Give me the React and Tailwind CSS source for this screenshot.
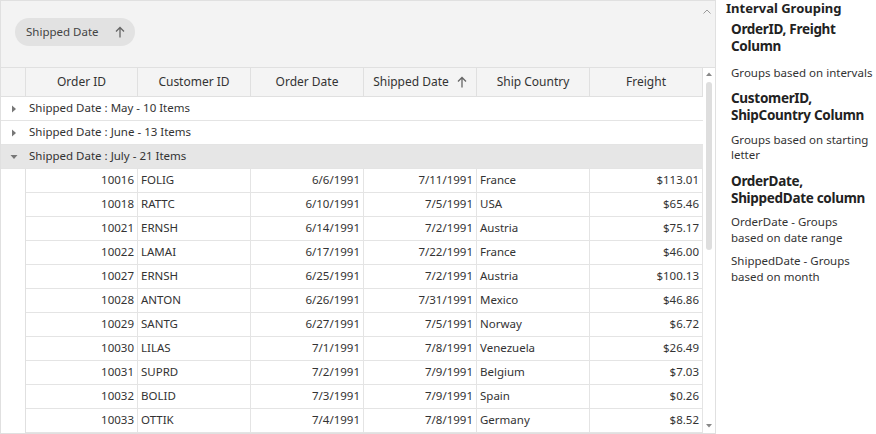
import React from "react";

const rows = [
  ["10016", "FOLIG", "6/6/1991", "7/11/1991", "France", "$113.01"],
  ["10018", "RATTC", "6/10/1991", "7/5/1991", "USA", "$65.46"],
  ["10021", "ERNSH", "6/14/1991", "7/2/1991", "Austria", "$75.17"],
  ["10022", "LAMAI", "6/17/1991", "7/22/1991", "France", "$46.00"],
  ["10027", "ERNSH", "6/25/1991", "7/2/1991", "Austria", "$100.13"],
  ["10028", "ANTON", "6/26/1991", "7/31/1991", "Mexico", "$46.86"],
  ["10029", "SANTG", "6/27/1991", "7/5/1991", "Norway", "$6.72"],
  ["10030", "LILAS", "7/1/1991", "7/8/1991", "Venezuela", "$26.49"],
  ["10031", "SUPRD", "7/2/1991", "7/9/1991", "Belgium", "$7.03"],
  ["10032", "BOLID", "7/3/1991", "7/9/1991", "Spain", "$0.26"],
  ["10033", "OTTIK", "7/4/1991", "7/8/1991", "Germany", "$8.52"],
];

const right = [true, false, true, true, false, true];

function UpArrow() {
  return (
    <svg width="10" height="12" viewBox="0 0 10 12">
      <path d="M5 1.5V11.5M1 5.5L5 1.5L9 5.5" fill="none" stroke="#666" strokeWidth="1.3" />
    </svg>
  );
}

function GroupRow({ label, open, active }) {
  return (
    <div className={`flex h-[24px] items-center border-b border-[#e4e4e4] ${active ? "bg-[#e6e6e6]" : "bg-white"}`}>
      <div className="flex w-[25px] items-center justify-center pl-[1px]">
        {open ? (
          <svg width="8" height="6" viewBox="0 0 8 6"><path d="M0.5 1L7.5 1L4 5Z" fill="#777" /></svg>
        ) : (
          <svg width="6" height="8" viewBox="0 0 6 8"><path d="M1 0.5L5 4L1 7.5Z" fill="#777" /></svg>
        )}
      </div>
      <span className="pb-[1px] pl-[3px] text-[11.5px] text-[#333]">{label}</span>
    </div>
  );
}

export default function App() {
  const headers = ["Order ID", "Customer ID", "Order Date", "Shipped Date", "Ship Country", "Freight"];
  return (
    <div className="flex h-[434px] w-[876px] bg-white" style={{ fontFamily: "'Segoe UI', 'Noto Sans', sans-serif" }}>
      <div className="flex h-[434px] w-[716px] flex-col border border-[#e0e0e0]">
        <div className="relative h-[67px] shrink-0 border-b border-[#e0e0e0] bg-[#f3f3f3] pl-[14px] pt-[17px]">
          <div className="flex h-[28px] w-[120px] items-center gap-[16px] rounded-full bg-[#e2e2e2] pl-[11px]">
            <span className="text-[11.5px] text-[#444]">Shipped Date</span>
            <UpArrow />
          </div>
          <svg width="8" height="5" viewBox="0 0 8 5" className="absolute right-[4px] top-[8px]">
            <path d="M0.5 4.5L4 1L7.5 4.5" fill="none" stroke="#999" strokeWidth="1" />
          </svg>
        </div>
        <div className="flex flex-1">
          <div className="w-[702px]">
            <div className="grid h-[29px] grid-cols-[25px_112px_113px_113px_113px_113px_113px] border-b border-[#e0e0e0] bg-[#f4f4f4]">
              <div className="border-r border-[#e0e0e0]" />
              {headers.map((h) => (
                <div key={h} className="flex items-center justify-center gap-[8px] border-r border-[#e0e0e0] text-[12px] text-[#333]">
                  <span>{h}</span>
                  {h === "Shipped Date" && <UpArrow />}
                </div>
              ))}
            </div>
            <GroupRow label="Shipped Date : May - 10 Items" />
            <GroupRow label="Shipped Date : June - 13 Items" />
            <GroupRow label="Shipped Date : July - 21 Items" open active />
            {rows.map((r) => (
              <div key={r[0]} className="grid h-[24px] grid-cols-[25px_112px_113px_113px_113px_113px_113px]">
                <div className="border-r border-[#e0e0e0]" />
                {r.map((c, i) => (
                  <div key={i} className={`flex items-center border-b border-r border-[#e4e4e4] px-[3px] pb-[1px] text-[11.5px] text-[#333] ${right[i] ? "justify-end" : "justify-start"}`}>
                    {c}
                  </div>
                ))}
              </div>
            ))}
          </div>
          <div className="flex w-[12px] flex-col items-center bg-white pt-[4px]">
            <svg width="6" height="4" viewBox="0 0 6 4"><path d="M0 4L3 0.5L6 4Z" fill="#888" /></svg>
            <div className="mt-[6px] h-[168px] w-[6px] rounded-full bg-[#dedede]" />
            <div className="flex-1" />
            <svg width="6" height="4" viewBox="0 0 6 4" className="mb-[5px]"><path d="M0 0L6 0L3 3.5Z" fill="#888" /></svg>
          </div>
        </div>
      </div>
      <div className="flex w-[160px] flex-col whitespace-nowrap pl-[10px] text-[#333]">
        <div className="text-[13px] font-bold leading-[17px] text-[#222]">Interval Grouping</div>
        <div className="pl-[5px]">
          <div className="mt-[4px] text-[13.5px] font-bold leading-[17px] tracking-[-0.3px] text-[#222]">OrderID, Freight<br />Column</div>
          <div className="mt-[10px] text-[11.5px] leading-[15px]">Groups based on intervals</div>
          <div className="mt-[10px] text-[13.5px] font-bold leading-[17px] tracking-[-0.3px] text-[#222]">CustomerID,<br />ShipCountry Column</div>
          <div className="mt-[8px] text-[11.5px] leading-[15px]">Groups based on starting<br />letter</div>
          <div className="mt-[11px] text-[13.5px] font-bold leading-[17px] tracking-[-0.3px] text-[#222]">OrderDate,<br />ShippedDate column</div>
          <div className="mt-[7px] text-[11.5px] leading-[16px]">OrderDate - Groups<br />based on date range</div>
          <div className="mt-[7px] text-[11.5px] leading-[16px]">ShippedDate - Groups<br />based on month</div>
        </div>
      </div>
    </div>
  );
}
